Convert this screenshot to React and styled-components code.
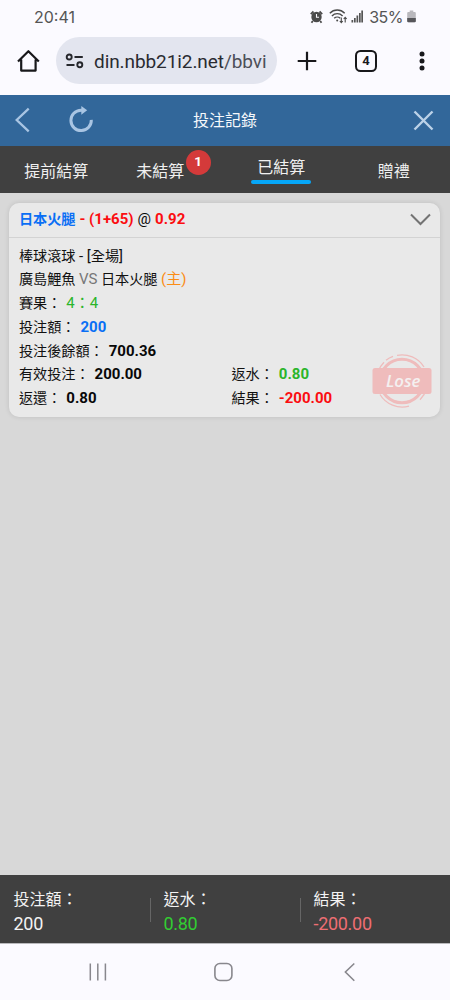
import React from "react";
import styled, { createGlobalStyle } from "styled-components";

const GlobalStyle = createGlobalStyle`
  * { box-sizing: border-box; }
  body { margin: 0; background: #d8d8d8; }
`;

const Screen = styled.div`
  width: 450px;
  height: 1000px;
  display: flex;
  flex-direction: column;
  overflow: hidden;
  background: #d8d8d8;
  font-family: Roboto, "Noto Sans CJK TC", sans-serif;
  color: #111;
  white-space: nowrap;
`;

const StatusBar = styled.div`
  flex: 0 0 33px;
  display: flex;
  align-items: center;
  justify-content: space-between;
  padding: 0 34.5px 0 34px;
  background: #fbfaff;
  color: #555;
  font-family: Inter, sans-serif;
  font-size: 16px;
`;

const StatusIcons = styled.div`
  display: flex;
  align-items: center;
  svg { display: block; }
`;

const WifiSlot = styled.span`
  margin: 0 3px 0 6px;
`;

const Battery = styled.span`
  margin: 0 3.5px 0 5px;
  letter-spacing: -0.5px;
`;

const BrowserBar = styled.div`
  flex: 0 0 62px;
  display: flex;
  align-items: flex-start;
  padding: 4px 0 0 17px;
  background: #fbfaff;
  svg { display: block; }
`;

const BrowserIcon = styled.div`
  height: 47px;
  display: flex;
  align-items: center;
  margin-left: ${(p) => p.$gap || 0}px;
`;

const Address = styled.div`
  width: 221px;
  height: 47px;
  margin-left: 16px;
  padding: 1px 0 0 9px;
  border-radius: 24px;
  display: flex;
  align-items: center;
  gap: 10px;
  background: #e3e5ef;
  color: #2a2b31;
  font-size: 19px;
  letter-spacing: -0.08px;
`;

const Path = styled.span`
  color: #4d4f58;
`;

const Header = styled.header`
  flex: 0 0 51px;
  display: grid;
  grid-template-columns: 110px 1fr 110px;
  align-items: center;
  background: #32679a;
  color: #f5f8fb;
  font-size: 16px;
  text-align: center;
  svg { display: block; }
`;

const HeaderTitle = styled.span`
  padding-bottom: 4px;
`;

const HeaderSide = styled.div`
  display: flex;
  align-items: center;
  justify-content: ${(p) => (p.$end ? "flex-end" : "flex-start")};
  gap: 36px;
  padding: ${(p) => (p.$end ? "0 16px 0 0" : "0 0 1px 14px")};
`;

const Tabs = styled.nav`
  flex: 0 0 47px;
  display: grid;
  grid-template-columns: repeat(4, 1fr);
  background: #404040;
`;

const Tab = styled.div`
  display: flex;
  justify-content: center;
  align-items: flex-start;
  padding-top: ${(p) => (p.$active ? 10 : 14)}px;
  padding-right: ${(p) => (p.$badge ? 17 : 0)}px;
  color: #f0f0f0;
  font-size: 16px;
  line-height: 24px;
`;

const TabLabel = styled.span`
  position: relative;
`;

const ActiveLabel = styled.span`
  display: flex;
  flex-direction: column;
  align-items: center;
  &::after {
    content: "";
    width: 60px;
    height: 4px;
    border-radius: 2px;
    background: #06a7f8;
  }
`;

const Badge = styled.span`
  position: absolute;
  left: 49.5px;
  top: -10px;
  width: 25px;
  height: 25px;
  border-radius: 50%;
  background: #d43a3a;
  color: #fff;
  font-size: 13.5px;
  font-weight: 700;
  line-height: 23px;
  text-align: center;
`;

const Content = styled.main`
  flex: 1;
  padding: 9.5px 9.6px 0 9.4px;
`;

const Card = styled.section`
  border-radius: 10px;
  background: #e9e9e9;
  box-shadow: 0 0 5px rgba(0, 0, 0, 0.12);
`;

const CardHeader = styled.div`
  height: 35px;
  display: flex;
  align-items: center;
  justify-content: space-between;
  padding: 0 9px 0 9.5px;
  border-bottom: 1px solid #d3d3d3;
  font-size: 14.1px;
`;

const CardTitle = styled.span`
  padding-bottom: 3px;
`;

const CardBody = styled.div`
  display: flex;
  height: 179px;
  padding: 7px 8px 0 9.5px;
`;

const Details = styled.div`
  width: 353px;
  font-size: 14.15px;
`;

const Row = styled.div`
  height: 23.8px;
  line-height: 23.8px;
  display: grid;
  grid-template-columns: ${(p) => (p.$split ? "212.5px 1fr" : "1fr")};
`;

const Value = styled.span`
  color: ${(p) => p.$color || "#080808"};
  font-size: 15px;
  font-weight: ${(p) => (p.$plain ? 400 : 700)};
  margin-left: ${(p) => p.$gap || 0}px;
`;

const Tint = styled.span`
  color: ${(p) => p.$color};
  font-size: ${(p) => p.$size || 14.15}px;
`;

const StampBox = styled.div`
  align-self: flex-end;
  padding-bottom: 8px;
  svg { display: block; }
`;

const Totals = styled.footer`
  flex: 0 0 69px;
  display: grid;
  grid-template-columns: repeat(3, 1fr);
  align-items: center;
  background: #404040;
  border-bottom: 1px solid #b9b9bc;
`;

const Total = styled.div`
  position: relative;
  padding-left: 13.5px;
  padding-top: 6px;
  color: #f3f3f3;
  font-size: 16px;
  line-height: 24px;
  & + &::before {
    content: "";
    position: absolute;
    left: 0;
    top: 16px;
    width: 1px;
    height: 24px;
    background: #666;
  }
`;

const Amount = styled.div`
  color: ${(p) => p.$color || "#f3f3f3"};
  font-size: 18px;
  letter-spacing: -0.3px;
`;

const SystemNav = styled.div`
  flex: 0 0 56px;
  display: flex;
  gap: 106px;
  padding: 17px 0 0 88px;
  background: #fbfaff;
  svg { display: block; }
`;

const AlarmIcon = () => (
  <svg width="13" height="14" viewBox="0 0 13 14">
    <circle cx="6.5" cy="7" r="5.2" fill="#4a4a4a" />
    <path d="M.8 4.200 3.500 1.500M12.200 4.200 9.500 1.500M2.800 11 1.500 12.700M10.200 11l1.300 1.700" stroke="#4a4a4a" strokeWidth="1.800" />
    <path d="M6.500 4v3.300H9" stroke="#fbfaff" strokeWidth="1.100" fill="none" />
  </svg>
);

const WifiIcon = () => (
  <svg width="19" height="15" viewBox="0 0 19 15" fill="none" stroke="#4a4a4a" strokeWidth="1.400">
    <path d="M.8 4.200C5-.1 11.500-.1 15.700 4.200M2.900 6.900c3-3 7.700-3 10.700 0M5.200 9.300c1.700-1.600 4.400-1.600 6 0" />
    <circle cx="8.200" cy="11.600" r="1" fill="#4a4a4a" stroke="none" />
    <path d="M12.300 8.500v5M10.800 12l1.500 1.700 1.500-1.700M16.200 13.500v-5M14.700 10l1.500-1.700 1.500 1.700" strokeWidth="1.100" />
  </svg>
);

const SignalIcon = () => (
  <svg width="13" height="13" viewBox="0 0 13 13" fill="#555">
    <path d="M.5 10h1.700v2.500H.5zM3 8h1.700v4.500H3zM5.500 5.500h1.700v7H5.500zM8 3h1.700v9.500H8zM10.300.5H12v12h-1.700z" />
  </svg>
);

const BatteryIcon = () => (
  <svg width="9" height="13" viewBox="0 0 9 13">
    <path d="M2.700.5h3.600v1.500h1.500q1 0 1 1V11q0 1.300-1.300 1.300h-6Q.200 12.300.200 11V3q0-1 1-1h1.500z" fill="#b9b8bd" />
    <path d="M.200 8h8.600v3q0 1.300-1.300 1.300h-6Q.200 12.300.200 11z" fill="#56565a" />
  </svg>
);

const HomeIcon = () => (
  <svg width="23" height="24" viewBox="0 0 23 24" fill="none" stroke="#18181b" strokeWidth="2.200" strokeLinejoin="round">
    <path d="M1 12.500 11.400 2.200 21.800 12.500M4.200 10.500V21.600h14.400V10.500" strokeLinecap="butt" />
  </svg>
);

const SiteIcon = () => (
  <svg width="19" height="16" viewBox="0 0 19 16" fill="none" stroke="#26272c" strokeWidth="1.900">
    <circle cx="4.200" cy="4" r="2.500" />
    <path d="M9.500 4h8.300M1.500 12h8" />
    <circle cx="14.800" cy="11.800" r="2.500" />
  </svg>
);

const PlusIcon = () => (
  <svg width="20" height="20" viewBox="0 0 20 20" stroke="#18181b" strokeWidth="2.200">
    <path d="M10 .7v18.600M.7 10h18.600" />
  </svg>
);

const TabCount = styled.div`
  width: 22px;
  height: 22px;
  border: 2px solid #18181b;
  border-radius: 5.5px;
  color: #18181b;
  font-size: 13px;
  font-weight: 700;
  line-height: 18px;
  text-align: center;
`;

const MoreIcon = () => (
  <svg width="6" height="20" viewBox="0 0 6 20" fill="#18181b">
    <circle cx="3" cy="3" r="2.500" />
    <circle cx="3" cy="10" r="2.500" />
    <circle cx="3" cy="17" r="2.500" />
  </svg>
);

const BackIcon = () => (
  <svg width="17" height="26" viewBox="0 0 17 26" fill="none" stroke="#a9c5e3" strokeWidth="2.300">
    <path d="M14.700 1.700 2.700 13l12 11.300" />
  </svg>
);

const ReloadIcon = () => (
  <svg width="28" height="28" viewBox="0 0 28 28" fill="none" stroke="#a9c5e3" strokeWidth="3">
    <path d="M24.300 13.800A10.200 10.200 0 1 1 14.100 4.200H16" />
    <path d="M14.300 0 20.200 4.200 14.300 8.800z" fill="#a9c5e3" stroke="none" />
  </svg>
);

const CloseIcon = () => (
  <svg width="21" height="21" viewBox="0 0 21 21" stroke="#bcd2e8" strokeWidth="2.400">
    <path d="M1.500 1.500l18 18M19.500 1.500l-18 18" />
  </svg>
);

const ChevronIcon = () => (
  <svg width="21" height="13" viewBox="0 0 21 13" fill="none" stroke="#737373" strokeWidth="2">
    <path d="M1 1.500l9.500 9.500L20 1.500" />
  </svg>
);

const Stamp = () => (
  <svg width="60" height="56" viewBox="0 0 60 56">
    <g fill="none" stroke="#efbcbc">
      <circle cx="30" cy="28" r="21.800" strokeWidth="3" />
      <path d="M5.800 19A26 26 0 0 1 12 9.200M14 7.200a26 26 0 0 1 7-3.800M25 2.300A26 26 0 0 1 52 14M54.500 36A26 26 0 0 1 48 46.800M37 53.200A26 26 0 0 1 8 41.500" strokeWidth="1.300" />
    </g>
    <rect x=".5" y="15" width="59" height="26" rx="2.500" fill="#efbcbc" />
    <text x="31.200" y="34" textAnchor="middle" fill="#f4f0f0" fontFamily="Open Sans, sans-serif" fontStyle="italic" fontWeight="600" fontSize="16.500" textLength="34.500" lengthAdjust="spacingAndGlyphs">
      Lose
    </text>
  </svg>
);

const RecentsIcon = () => (
  <svg width="20" height="22" viewBox="0 0 20 22" stroke="#88878d" strokeWidth="1.500">
    <path d="M2.300 2.500v17M9.800 2.500v17M17.400 2.500v17" />
  </svg>
);

const HomeKeyIcon = () => (
  <svg width="20" height="22" viewBox="0 0 20 22" fill="none" stroke="#88878d" strokeWidth="1.600">
    <rect x=".9" y="2.500" width="17" height="17" rx="5" />
  </svg>
);

const BackKeyIcon = () => (
  <svg width="20" height="22" viewBox="0 0 20 22" fill="none" stroke="#88878d" strokeWidth="1.600">
    <path d="M14.300 2.500 5.400 11l8.900 8.800" />
  </svg>
);

const BLUE = "#0a6ff5";
const RED = "#fb0d10";
const GREEN = "#2bb52b";

const Field = ({ label, value, color, plain, gap = 5 }) => (
  <span>
    {label}：
    <Value $color={color} $plain={plain} $gap={gap}>
      {value}
    </Value>
  </span>
);

export default function App() {
  return (
    <Screen>
      <GlobalStyle />
      <StatusBar>
        <span>20:41</span>
        <StatusIcons>
          <AlarmIcon />
          <WifiSlot>
            <WifiIcon />
          </WifiSlot>
          <SignalIcon />
          <Battery>35%</Battery>
          <BatteryIcon />
        </StatusIcons>
      </StatusBar>
      <BrowserBar>
        <BrowserIcon>
          <HomeIcon />
        </BrowserIcon>
        <Address>
          <SiteIcon />
          <span>
            din.nbb21i2.net<Path>/bbvi</Path>
          </span>
        </Address>
        <BrowserIcon $gap={20}>
          <PlusIcon />
        </BrowserIcon>
        <BrowserIcon $gap={38}>
          <TabCount>4</TabCount>
        </BrowserIcon>
        <BrowserIcon $gap={42}>
          <MoreIcon />
        </BrowserIcon>
      </BrowserBar>
      <Header>
        <HeaderSide>
          <BackIcon />
          <ReloadIcon />
        </HeaderSide>
        <HeaderTitle>投注記錄</HeaderTitle>
        <HeaderSide $end>
          <CloseIcon />
        </HeaderSide>
      </Header>
      <Tabs>
        <Tab>
          <TabLabel>提前結算</TabLabel>
        </Tab>
        <Tab $badge>
          <TabLabel>
            未結算<Badge>1</Badge>
          </TabLabel>
        </Tab>
        <Tab $active>
          <ActiveLabel>已結算</ActiveLabel>
        </Tab>
        <Tab>
          <TabLabel>贈禮</TabLabel>
        </Tab>
      </Tabs>
      <Content>
        <Card>
          <CardHeader>
            <CardTitle>
              <Tint as="b" $color={BLUE}>日本火腿</Tint>
              <Value $color={RED} $gap={4}>- (1+65)</Value>
              <Value $plain $gap={4}>@</Value>
              <Value $color={RED} $gap={4}>0.92</Value>
            </CardTitle>
            <ChevronIcon />
          </CardHeader>
          <CardBody>
            <Details>
              <Row>
                <span>
                  棒球滾球 <Tint $size={15}>- [</Tint>全場<Tint $size={15}>]</Tint>
                </span>
              </Row>
              <Row>
                <span>
                  廣島鯉魚 <Tint $color="#777" $size={15}>VS</Tint>{" "}
                  <Tint>日本火腿</Tint> <Tint $color="#fb8c16" $size={15}>(主)</Tint>
                </span>
              </Row>
              <Row>
                <Field label="賽果" value="4：4" color={GREEN} plain />
              </Row>
              <Row>
                <Field label="投注額" value="200" color={BLUE} />
              </Row>
              <Row>
                <Field label="投注後餘額" value="700.36" />
              </Row>
              <Row $split>
                <Field label="有效投注" value="200.00" />
                <Field label="返水" value="0.80" color={GREEN} />
              </Row>
              <Row $split>
                <Field label="返還" value="0.80" />
                <Field label="結果" value="-200.00" color={RED} />
              </Row>
            </Details>
            <StampBox>
              <Stamp />
            </StampBox>
          </CardBody>
        </Card>
      </Content>
      <Totals>
        <Total>
          投注額：<Amount>200</Amount>
        </Total>
        <Total>
          返水：<Amount $color="#32cd32">0.80</Amount>
        </Total>
        <Total>
          結果：<Amount $color="#ee6e73">-200.00</Amount>
        </Total>
      </Totals>
      <SystemNav>
        <RecentsIcon />
        <HomeKeyIcon />
        <BackKeyIcon />
      </SystemNav>
    </Screen>
  );
}
